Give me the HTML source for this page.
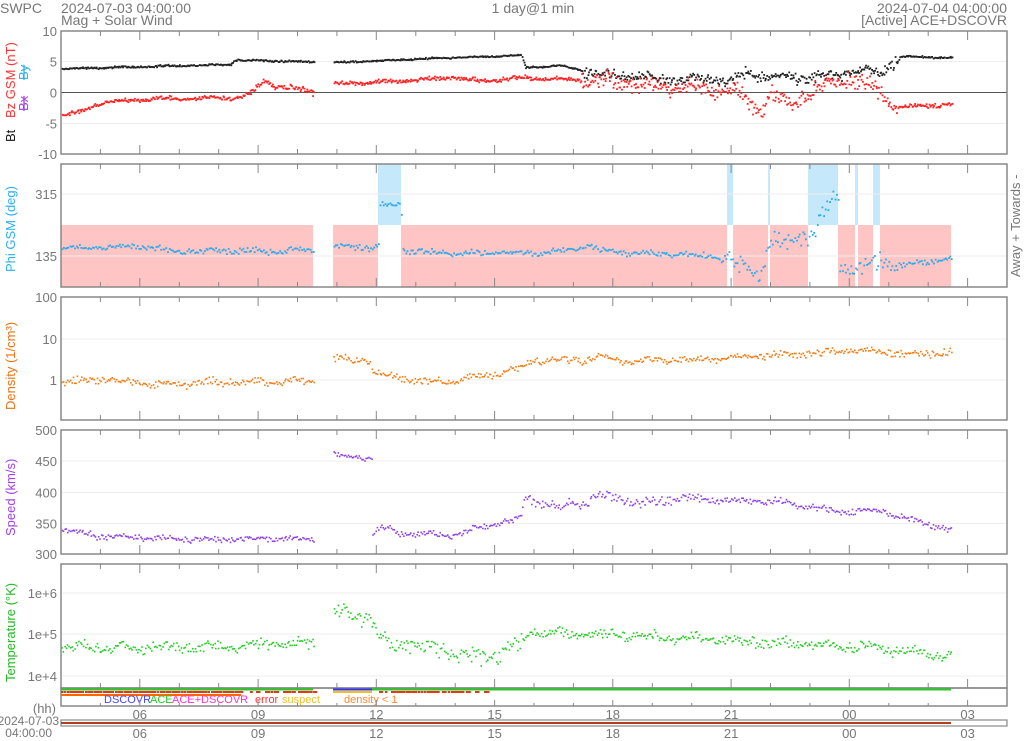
<!DOCTYPE html>
<html><head><meta charset="utf-8"><style>
body{margin:0;background:#fff;width:1024px;height:741px;overflow:hidden}
svg{display:block;font-family:"Liberation Sans","DejaVu Sans",sans-serif}
</style></head><body>
<svg id="s" width="1024" height="741" viewBox="0 0 1024 741" xmlns="http://www.w3.org/2000/svg">
<g fill="#777" font-size="14">
<text x="0" y="13">SWPC</text>
<text x="61" y="13">2024-07-03 04:00:00</text>
<text x="61" y="25">Mag + Solar Wind</text>
<text x="533" y="13" text-anchor="middle">1 day@1 min</text>
<text x="1007" y="13" text-anchor="end">2024-07-04 04:00:00</text>
<text x="1007" y="25" text-anchor="end">[Active] ACE+DSCOVR</text>
</g>
<g font-size="13">
<text transform="translate(15,142) rotate(-90)" fill="#111">Bt</text>
<text transform="translate(15,118) rotate(-90)" fill="#f33">Bz GSM (nT)</text>
<text transform="translate(28,111) rotate(-90)" fill="#a040f0" text-decoration="line-through">Bx</text>
<text transform="translate(28,80) rotate(-90)" fill="#2ab0f0" text-decoration="line-through">By</text>
<text transform="translate(15,272) rotate(-90)" fill="#2ab0f0">Phi GSM (deg)</text>
<text transform="translate(15,410) rotate(-90)" fill="#f07010">Density (1/cm³)</text>
<text transform="translate(15,536) rotate(-90)" fill="#a040f0">Speed (km/s)</text>
<text transform="translate(15,682) rotate(-90)" fill="#22bb22">Temperature (°K)</text>
<text transform="translate(1020,277) rotate(-90)" fill="#777">Away +  Towards -</text>
</g>
<g id="g"></g>
</svg>
<script>
var g=document.getElementById('g'),h='';
var X0=61,X1=1007,PX=39.4167;
var P=[[31,154],[164,287],[297,420],[430,554],[564,688]];
var seed=7;function r(){seed=(seed*16807)%2147483647;return seed/2147483647;}
function n(){return (r()+r()+r()-1.5);}
function interp(k,x){for(var i=0;i<k.length-1;i++){if(x>=k[i][0]&&x<=k[i+1][0]){var t=(x-k[i][0])/(k[i+1][0]-k[i][0]||1);return k[i][1]+t*(k[i+1][1]-k[i][1]);}}return null;}
function segs(k,col,fy,step,noise,sz,segsL){for(var s=0;s<segsL.length;s++){for(var x=segsL[s][0];x<=segsL[s][1];x+=step){var v=interp(k,x);if(v==null)continue;var y=fy(v)+n()*noise(x)+Math.sin(x/7)*noise(x)*0.4;h+='<rect x="'+(x+r()*0.8).toFixed(1)+'" y="'+y.toFixed(1)+'" width="'+sz+'" height="'+sz+'" fill="'+col+'"/>';}}}
var pink=[[61,313],[333,378],[401,727],[733,768],[770,808],[838,855],[858,873],[880,951]];
var blue=[[378,401],[727,733],[768,770],[808,838],[855,858],[873,880]];
pink.forEach(function(a){h+='<rect x="'+a[0]+'" y="225" width="'+(a[1]-a[0])+'" height="62" fill="#ffc4c4"/>';});
blue.forEach(function(a){h+='<rect x="'+a[0]+'" y="164" width="'+(a[1]-a[0])+'" height="61" fill="#c6e8fb"/>';});
function hl(y,c){h+='<line x1="61" x2="1007" y1="'+y+'" y2="'+y+'" stroke="'+c+'" stroke-width="1"/>';}
[61.5,123.5].forEach(function(y){hl(y,'#eee')});hl(92.5,'#555');
[194,256].forEach(function(y){hl(y,'#eee')});
[339,380].forEach(function(y){hl(y,'#eee')});
[461,492.5,523.5].forEach(function(y){hl(y,'#eee')});
[593,634,676].forEach(function(y){hl(y,'#eee')});
function lab(x,y,t){h+='<text x="'+x+'" y="'+(y+5)+'" fill="#777" font-size="13" text-anchor="end">'+t+'</text>';}
[[31,'10'],[61.5,'5'],[92.5,'0'],[123.5,'-5'],[154,'-10']].forEach(function(a){lab(57,a[0],a[1])});
[[194,'315'],[256,'135']].forEach(function(a){lab(57,a[0],a[1])});
[[297,'100'],[339,'10'],[380,'1']].forEach(function(a){lab(57,a[0],a[1])});
[[430,'500'],[461,'450'],[492.5,'400'],[523.5,'350'],[554,'300']].forEach(function(a){lab(57,a[0],a[1])});
[[593,'1e+6'],[634,'1e+5'],[676,'1e+4']].forEach(function(a){lab(57,a[0],a[1])});
var bt=[[61,4],[230,4.7],[234,5.4],[313,5.1],[333,5],[420,5.6],[520,6.2],[525,4.2],[560,4.5],[600,3],[650,2.5],[700,2.3],[730,2],[745,3.5],[760,2.8],[800,2.5],[840,3],[860,4],[880,3],[895,5.5],[900,6],[951,5.8]];
var bz=[[61,-3.6],[80,-3],[100,-1.5],[150,-0.9],[230,-0.8],[250,0],[262,2],[275,1.2],[300,0.6],[313,0.3],[333,1.5],[400,2],[450,2.6],[480,2],[520,2.6],[600,2],[650,1.3],[700,0.8],[735,0.3],[760,-3],[770,0],[790,-2.3],[805,0],[835,2],[850,2.5],[875,0.5],[893,-2.3],[951,-1.8]];
var y1=function(v){return 92.5-v*6.15;};
var S1=[[61,313],[333,951]];
segs(bt,'#222',y1,1,function(x){return x>580&&x<900?5:0.8},1.8,S1);
segs(bz,'#f22',y1,1,function(x){return x>240&&x<320?3:(x>580&&x<900?8:2)},1.8,S1);
var phi=[[61,160],[150,165],[170,150],[300,155],[313,155],[333,165],[378,162],[379,285],[400,285],[401,155],[450,145],[520,145],[560,150],[590,168],[600,150],[700,140],[727,130],[733,110],[760,95],[768,170],[790,180],[808,200],[837,320],[838,110],[855,100],[880,120],[900,112],[951,130]];
var yp=function(v){return 256-(v-135)*0.3444;};
segs(phi,'#2aaaee',yp,1.6,function(x){return x>720&&x<900?9:3},1.8,[[61,313],[333,951]]);
var den=[[61,0.9],[100,1.1],[150,0.8],[200,0.9],[313,1.0],[333,3.5],[370,3.0],[372,1.5],[400,1.2],[420,0.9],[450,1.0],[500,1.5],[520,2],[530,3],[580,3.2],[600,4],[620,3],[700,3.2],[760,4],[800,4.5],[870,5.5],[900,4.5],[951,5]];
var yd=function(v){return 380-41*Math.log10(v);};
segs(den,'#f47a10',yd,1.4,function(x){return 3.5},1.6,[[61,313],[333,951]]);
var spd=[[61,340],[100,330],[200,325],[313,325],[333,460],[371,455],[372,330],[380,345],[400,335],[450,332],[520,360],[525,395],[560,375],[600,395],[640,385],[700,390],[780,385],[830,370],[880,370],[951,340]];
var ys=function(v){return 554-(v-300)*0.62;};
segs(spd,'#9040e8',ys,1.4,function(x){return x>520&&x<700?5:3},1.6,[[61,313],[333,951]]);
var tmp=[[61,4.7],[200,4.7],[313,4.8],[333,5.5],[370,5.5],[380,4.85],[450,4.6],[480,4.45],[520,4.8],[530,5.08],[700,4.9],[800,4.78],[870,4.7],[951,4.45]];
var yt=function(v){return 634-41.5*(v-5);};
segs(tmp,'#22cc22',yt,1.4,function(x){return x>330&&x<520?8:5},1.6,[[61,313],[333,951]]);
P.forEach(function(p){h+='<rect x="61" y="'+p[0]+'" width="946" height="'+(p[1]-p[0])+'" fill="none" stroke="#888" stroke-width="1.5"/>';
for(var i=1;i<24;i++){var x=(X0+i*PX).toFixed(1),L=((i+1)%3==0)?9:5;h+='<line x1="'+x+'" x2="'+x+'" y1="'+p[0]+'" y2="'+(p[0]+L)+'" stroke="#888"/><line x1="'+x+'" x2="'+x+'" y1="'+p[1]+'" y2="'+(p[1]-L)+'" stroke="#888"/>';}});
h+='<rect x="61" y="688" width="946" height="18" fill="none" stroke="#888" stroke-width="1.5"/>';
h+='<line x1="61" x2="313" y1="689.5" y2="689.5" stroke="#22cc22" stroke-width="2"/><line x1="372" x2="951" y1="689.5" y2="689.5" stroke="#22cc22" stroke-width="2"/><line x1="333" x2="372" y1="689.5" y2="689.5" stroke="#3333ee" stroke-width="2"/><line x1="333" x2="372" y1="692" y2="692" stroke="#f0c020" stroke-width="2"/>';
for(var x=61;x<490;x+=3){if(x>313&&x<375)continue;if(r()<0.6||x<240)h+='<rect x="'+x+'" y="691" width="'+(2+r()*3).toFixed(1)+'" height="2" fill="#ee3311"/>';}
h+='<rect x="61" y="694" width="180" height="2" fill="#ff6600"/>';
h+='<g font-size="11"><text x="104" y="703" fill="#4444ff">DSCOVR</text><text x="150" y="703" fill="#22cc22">ACE</text><text x="172" y="703" fill="#ff33cc">ACE+DSCOVR</text><text x="255" y="703" fill="#ff3333">error</text><text x="282" y="703" fill="#f0c020">suspect</text><text x="344" y="703" fill="#ff8833">density &lt; 1</text></g>';
for(var i=1;i<24;i++){var x=(X0+i*PX).toFixed(1),L=((i+1)%3==0)?6:3;h+='<line x1="'+x+'" x2="'+x+'" y1="706" y2="'+(706-L)+'" stroke="#888"/>';}
h+='<rect x="61" y="720" width="946" height="6" fill="none" stroke="#888" stroke-width="1.2"/><line x1="61" x2="951" y1="723" y2="723" stroke="#b04020" stroke-width="2"/>';
var tl=['06','09','12','15','18','21','00','03'];
tl.forEach(function(t,j){var x=(X0+(2+3*j)*PX).toFixed(1);h+='<text x="'+x+'" y="719" fill="#777" font-size="13" text-anchor="middle">'+t+'</text><text x="'+x+'" y="738" fill="#777" font-size="13" text-anchor="middle">'+t+'</text>';});
h+='<text x="56" y="713" fill="#777" font-size="13" text-anchor="end">(hh)</text><text x="59" y="725" fill="#777" font-size="12" text-anchor="end">2024-07-03</text><text x="52" y="737" fill="#777" font-size="12" text-anchor="end">04:00:00</text>';
g.innerHTML=h;
</script>
</body></html>
